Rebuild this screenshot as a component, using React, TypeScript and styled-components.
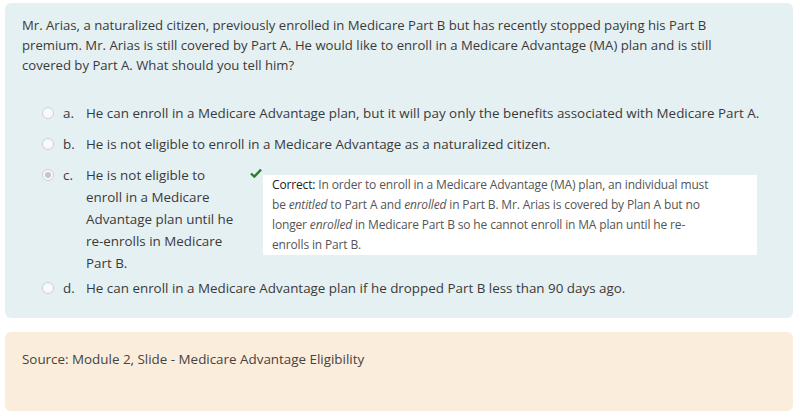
import * as React from 'react';
import styled, { createGlobalStyle } from 'styled-components';

const GlobalStyle = createGlobalStyle`
  html, body {
    margin: 0;
    padding: 0;
    background: #ffffff;
  }
  body {
    font-family: 'Open Sans', 'Noto Sans', sans-serif;
    color: #3a3a3a;
  }
`;

const Page = styled.div`
  padding: 3px 7px 6px 5px;
  display: flex;
  flex-direction: column;
  gap: 14px;
`;

const QuestionPanel = styled.div`
  background: #e5f0f3;
  border-radius: 6px;
  padding: 12px 17px 19px 17px;
`;

const Prompt = styled.p`
  margin: 0;
  padding-right: 16px;
  font-size: 13.15px;
  line-height: 20px;
  color: #3a3a3a;
`;

const Options = styled.ul`
  list-style: none;
  margin: 27px 0 0 0;
  padding: 0 0 0 20px;
  display: flex;
  flex-direction: column;
  gap: 9px;
`;

const Option = styled.li<{ $pullUp?: boolean }>`
  display: flex;
  align-items: flex-start;
  font-size: 13.4px;
  line-height: 22px;
  color: #3a3a3a;
  ${(p) => (p.$pullUp ? 'margin-top: -6px;' : '')}
`;

const Radio = styled.span<{ $checked?: boolean }>`
  flex: none;
  box-sizing: border-box;
  width: 12px;
  height: 12px;
  margin-top: 5px;
  margin-right: 9px;
  border-radius: 50%;
  border: 1px solid #cdd1d3;
  background: #f8f9f9;
  display: flex;
  align-items: center;
  justify-content: center;
  &::after {
    content: '';
    display: ${(p) => (p.$checked ? 'block' : 'none')};
    width: 6px;
    height: 6px;
    border-radius: 50%;
    background: #c4c6c7;
  }
`;

const Letter = styled.span`
  flex: none;
  width: 23px;
`;

const OptionText = styled.span<{ $narrow?: boolean }>`
  ${(p) => (p.$narrow ? 'width: 150px; flex: none;' : '')}
`;

const FeedbackWrap = styled.div`
  display: flex;
  align-items: flex-start;
  margin-left: 14px;
`;

const Check = styled.svg`
  flex: none;
  width: 12px;
  height: 10px;
  margin-top: 4px;
`;

const Feedback = styled.div`
  background: #ffffff;
  width: 444px;
  margin-top: 11px;
  margin-left: 1px;
  padding: 0 41px 0 9px;
  font-size: 12px;
  letter-spacing: -0.15px;
  line-height: 20px;
  color: #555555;
  em {
    font-style: italic;
  }
`;

const Lead = styled.span`
  color: #222222;
`;

const SourcePanel = styled.div`
  background: #fbeddb;
  border-radius: 6px;
  padding: 17px 17px 42px 17px;
  font-size: 13.4px;
  line-height: 20px;
  color: #444444;
`;

export default function App() {
  return (
    <>
      <GlobalStyle />
      <Page>
        <QuestionPanel>
          <Prompt>
            Mr. Arias, a naturalized citizen, previously enrolled in Medicare Part B but has recently stopped paying his
            Part B premium. Mr. Arias is still covered by Part A. He would like to enroll in a Medicare Advantage (MA)
            plan and is still covered by Part A. What should you tell him?
          </Prompt>
          <Options>
            <Option>
              <Radio />
              <Letter>a.</Letter>
              <OptionText>
                He can enroll in a Medicare Advantage plan, but it will pay only the benefits associated with Medicare
                Part A.
              </OptionText>
            </Option>
            <Option>
              <Radio />
              <Letter>b.</Letter>
              <OptionText>He is not eligible to enroll in a Medicare Advantage as a naturalized citizen.</OptionText>
            </Option>
            <Option>
              <Radio $checked />
              <Letter>c.</Letter>
              <OptionText $narrow>
                He is not eligible to enroll in a Medicare Advantage plan until he re-enrolls in Medicare Part B.
              </OptionText>
              <FeedbackWrap>
                <Check viewBox="0 0 12 10">
                  <path d="M1 5.5 L4.3 8.6 L11 1.6" fill="none" stroke="#2f7d1e" strokeWidth="2.4" />
                </Check>
                <Feedback>
                  <Lead>Correct:</Lead> In order to enroll in a Medicare Advantage (MA) plan, an individual must be{' '}
                  <em>entitled</em> to Part A and <em>enrolled</em> in Part B. Mr. Arias is covered by Plan A but no
                  longer <em>enrolled</em> in Medicare Part B so he cannot enroll in MA plan until he re-enrolls in Part
                  B.
                </Feedback>
              </FeedbackWrap>
            </Option>
            <Option $pullUp>
              <Radio />
              <Letter>d.</Letter>
              <OptionText>He can enroll in a Medicare Advantage plan if he dropped Part B less than 90 days ago.</OptionText>
            </Option>
          </Options>
        </QuestionPanel>
        <SourcePanel>Source: Module 2, Slide - Medicare Advantage Eligibility</SourcePanel>
      </Page>
    </>
  );
}
